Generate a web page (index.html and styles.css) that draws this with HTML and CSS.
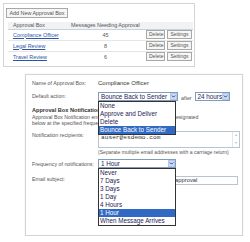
FILE: index.html
```html
<!DOCTYPE html>
<html lang="en">
<head>
  <meta charset="UTF-8">
  <title>Approval Boxes</title>
  <link rel="stylesheet" href="styles.css">
</head>
<body>
  <div class="panel boxes">
    <button class="btn add">Add New Approval Box</button>
    <table class="box-list">
      <colgroup>
        <col class="c-name"><col class="c-count"><col class="c-del"><col class="c-set">
      </colgroup>
      <thead>
        <tr><th>Approval Box</th><th colspan="3">Messages Needing Approval</th></tr>
      </thead>
      <tbody>
        <tr>
          <td><a href="#">Compliance Officer</a></td>
          <td class="num">45</td>
          <td><button class="btn">Delete</button></td>
          <td><button class="btn">Settings</button></td>
        </tr>
        <tr>
          <td><a href="#">Legal Review</a></td>
          <td class="num">8</td>
          <td><button class="btn">Delete</button></td>
          <td><button class="btn">Settings</button></td>
        </tr>
        <tr>
          <td><a href="#">Travel Review</a></td>
          <td class="num">6</td>
          <td><button class="btn">Delete</button></td>
          <td><button class="btn">Settings</button></td>
        </tr>
      </tbody>
    </table>
  </div>

  <div class="panel settings">
    <div class="row name-row">
      <span class="label">Name of Approval Box:</span>
      <span class="value">Compliance Officer</span>
    </div>

    <div class="row action-row">
      <span class="label">Default action:</span>
      <div class="select action">
        <span class="select-value">Bounce Back to Sender</span>
        <span class="select-arrow"><svg viewBox="0 0 8 8" width="5" height="5"><path d="M1.5 2.5 L4 5 L6.5 2.5" fill="none" stroke="#2b3f7a" stroke-width="1.6"/></svg></span>
        <ul class="select-list">
          <li>None</li>
          <li>Approve and Deliver</li>
          <li>Delete</li>
          <li class="on">Bounce Back to Sender</li>
        </ul>
      </div>
      <span class="after">after</span>
      <div class="select hours">
        <span class="select-value">24 hours</span>
        <span class="select-arrow"><svg viewBox="0 0 8 8" width="5" height="5"><path d="M1.5 2.5 L4 5 L6.5 2.5" fill="none" stroke="#2b3f7a" stroke-width="1.6"/></svg></span>
      </div>
    </div>

    <h3 class="heading">Approval Box Notification</h3>
    <p class="desc">Approval Box Notification emails will be sent to the recipients designated<br>below at the specified frequency.</p>

    <div class="row recip-row">
      <span class="label">Notification recipients:</span>
      <div class="textarea">
        <span class="mono">auser@esdemo.com</span>
        <span class="scroll"><i>&#9650;</i><i>&#9660;</i></span>
      </div>
    </div>
    <p class="hint">(Separate multiple email addresses with a carriage return)</p>

    <div class="row freq-row">
      <span class="label">Frequency of notifications:</span>
      <div class="select freq">
        <span class="select-value">1 Hour</span>
        <span class="select-arrow"><svg viewBox="0 0 8 8" width="5" height="5"><path d="M1.5 2.5 L4 5 L6.5 2.5" fill="none" stroke="#2b3f7a" stroke-width="1.6"/></svg></span>
        <ul class="select-list">
          <li>Never</li>
          <li>7 Days</li>
          <li>3 Days</li>
          <li>1 Day</li>
          <li>4 Hours</li>
          <li class="on">1 Hour</li>
          <li>When Message Arrives</li>
        </ul>
      </div>
    </div>

    <div class="row subject-row">
      <span class="label">Email subject:</span>
      <div class="input">New messages are awaiting approval</div>
    </div>
  </div>
</body>
</html>
```

FILE: styles.css
```css
* {
  margin: 0;
  padding: 0;
  box-sizing: border-box;
}

body {
  background: #fff;
  font-family: "Liberation Sans", Arial, sans-serif;
  color: #444;
}

.panel {
  border: 1px solid #d4d4d4;
  background: #fff;
}

/* approval box list */
.boxes {
  margin: 3px 0 0 3px;
  width: 192px;
  height: 64px;
  padding: 4px 1px 0 4px;
}

.btn {
  font-family: "Liberation Sans", Arial, sans-serif;
  font-size: 5px;
  color: #555;
  background: #f6f6f6;
  border: 1px solid #a8a8a8;
  height: 9px;
  padding: 0 2px;
  line-height: 7px;
  display: block;
  width: 100%;
}

.add {
  margin-left: -2px;
  width: 62px;
  height: 10px;
  font-size: 5.4px;
  line-height: 8px;
}

.box-list {
  margin-top: 4px;
  width: 185px;
  border-collapse: collapse;
  table-layout: fixed;
  font-size: 5.4px;
}

.c-name { width: 58px; }
.c-count { width: 79px; }
.c-del { width: 21px; }
.c-set { width: 27px; }

.box-list th {
  text-align: left;
  font-weight: normal;
  color: #555;
  background: #f0f2f4;
  border-bottom: 1px solid #c8d0dc;
  height: 7px;
  padding: 0 0 0 5px;
  line-height: 6px;
}

.box-list td {
  height: 11px;
  border-bottom: 1px solid #e6e6e6;
  padding: 0 1px;
}

.box-list td:first-child {
  padding-left: 5px;
}

.box-list tbody tr:last-child td {
  border-bottom: none;
}

.box-list a {
  color: #2d55a6;
}

.box-list .num {
  text-align: center;
  color: #555;
}

/* settings */
.settings {
  margin: 7px 0 0 25px;
  width: 218px;
  height: 162px;
  padding: 4px 0 0 6px;
  box-shadow: 0 0 1px #ddd;
}

.row {
  display: flex;
  align-items: center;
}

.label {
  width: 66px;
  flex: none;
  font-size: 5.3px;
  color: #555;
}

.name-row {
  height: 8px;
}

.value {
  font-size: 6px;
  color: #333;
}

.action-row {
  margin-top: 5px;
  align-items: flex-start;
}

.action-row .label {
  margin-top: 1px;
}

.select {
  position: relative;
  height: 9px;
  border: 1px solid #7f9db9;
  background: #fff;
  display: flex;
  align-items: center;
  font-size: 6.3px;
  color: #1e2258;
}

.select-value {
  flex: 1;
  padding-left: 2px;
  white-space: nowrap;
  overflow: hidden;
}

.select-arrow {
  width: 7px;
  height: 7px;
  background: #cbdaf8;
  border: 1px solid #b5c7ec;
  display: flex;
  align-items: center;
  justify-content: center;
}

.select.action { width: 80px; }
.select.hours { width: 35px; }
.select.freq { width: 78px; }

.after {
  font-size: 5.3px;
  margin: 3px 3px 0 3px;
  color: #555;
}

.select-list {
  position: absolute;
  top: 8px;
  left: -1px;
  width: 78px;
  list-style: none;
  background: #fff;
  border: 1px solid #333;
  z-index: 2;
}

.select-list li {
  height: 8px;
  line-height: 8px;
  padding-left: 1px;
  white-space: nowrap;
  overflow: hidden;
}

.select-list li.on {
  background: #316ac5;
  color: #fff;
}

.heading {
  margin-top: 6px;
  font-size: 5.6px;
  font-weight: bold;
  color: #333;
  line-height: 7px;
}

.desc {
  font-size: 5.2px;
  line-height: 6px;
  color: #555;
}

.recip-row {
  margin-top: 5px;
  align-items: flex-start;
}

.recip-row .label {
  margin-top: 1px;
}

.textarea {
  width: 142px;
  height: 17px;
  border: 1px solid #b8c4d0;
  display: flex;
  justify-content: space-between;
  padding: 2px 0 0 2px;
}

.mono {
  font-family: "Liberation Mono", monospace;
  font-size: 6.2px;
  color: #333;
}

.scroll {
  width: 7px;
  margin-top: -2px;
  border-left: 1px solid #e2e6ea;
  display: flex;
  flex-direction: column;
  justify-content: space-between;
  font-size: 3.5px;
  color: #b8c0c8;
  text-align: center;
}

.scroll i {
  font-style: normal;
  line-height: 7px;
}

.hint {
  margin: 1px 0 0 66px;
  font-size: 5.1px;
  color: #555;
  line-height: 7px;
}

.freq-row {
  margin-top: 3px;
}

.subject-row {
  margin-top: 8px;
  align-items: flex-start;
}

.input {
  width: 140px;
  height: 9px;
  border: 1px solid #b8c4d0;
  font-size: 5.8px;
  line-height: 7px;
  padding-left: 2px;
  color: #333;
  white-space: nowrap;
  overflow: hidden;
}
```
